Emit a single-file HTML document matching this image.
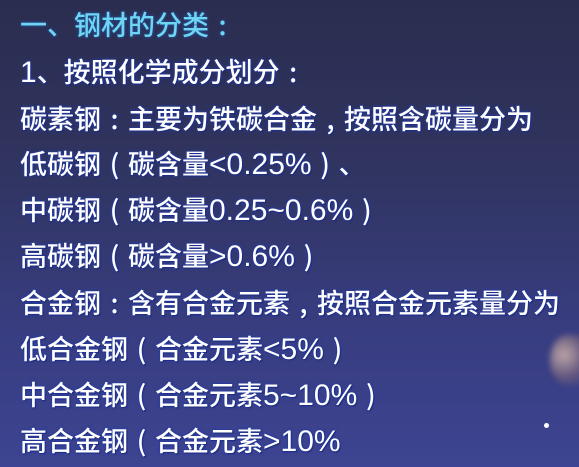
<!DOCTYPE html>
<html><head><meta charset="utf-8"><style>
html,body{margin:0;padding:0}
body{width:579px;height:467px;overflow:hidden;position:relative;
background:linear-gradient(180deg,#2b2d4f 0%,#30345f 35%,#383d80 70%,#3d4491 100%);
font-family:"Noto Sans CJK SC","Liberation Sans",sans-serif;}
.l{position:absolute;left:20px;font-size:27px;line-height:32px;white-space:nowrap;color:#fff;
text-shadow:0 0 2px #1a2a8a,0 0 3px #3050c0,1px 1px 1px #1a1f60;font-weight:500}
.t{color:#6fd6f2;text-shadow:0 0 3px #2060c0}
.p{display:inline-block;width:27px;text-align:center}
.n{font-family:"Liberation Sans",sans-serif;font-size:30px}
</style></head><body>
<div class="l t" style="top:8px">一、钢材的分类<span class="p">:</span></div>
<div class="l" style="top:55px"><span class="n">1</span>、按照化学成分划分<span class="p">:</span></div>
<div class="l" style="top:102px">碳素钢<span class="p">:</span>主要为铁碳合金<span class="p">,</span>按照含碳量分为</div>
<div class="l" style="top:147px">低碳钢<span class="p">(</span>碳含量<span class="n">&lt;0.25%</span><span class="p">)</span>、</div>
<div class="l" style="top:193px">中碳钢<span class="p">(</span>碳含量<span class="n">0.25~0.6%</span><span class="p">)</span></div>
<div class="l" style="top:239px">高碳钢<span class="p">(</span>碳含量<span class="n">&gt;0.6%</span><span class="p">)</span></div>
<div class="l" style="top:286px">合金钢<span class="p">:</span>含有合金元素<span class="p">,</span>按照合金元素量分为</div>
<div class="l" style="top:332px">低合金钢<span class="p">(</span>合金元素<span class="n">&lt;5%</span><span class="p">)</span></div>
<div class="l" style="top:378px">中合金钢<span class="p">(</span>合金元素<span class="n">5~10%</span><span class="p">)</span></div>
<div class="l" style="top:424px">高合金钢<span class="p">(</span>合金元素<span class="n">&gt;10%</span></div>
<div style="position:absolute;left:550px;top:335px;width:35px;height:50px;border-radius:50% 10% 10% 50%;background:radial-gradient(circle at 40% 40%,rgba(220,190,175,0.8),rgba(140,110,120,0.5) 60%,transparent 100%);filter:blur(3px)"></div>
<div style="position:absolute;left:544px;top:423px;width:5px;height:5px;border-radius:50%;background:#fff"></div>
</body></html>
